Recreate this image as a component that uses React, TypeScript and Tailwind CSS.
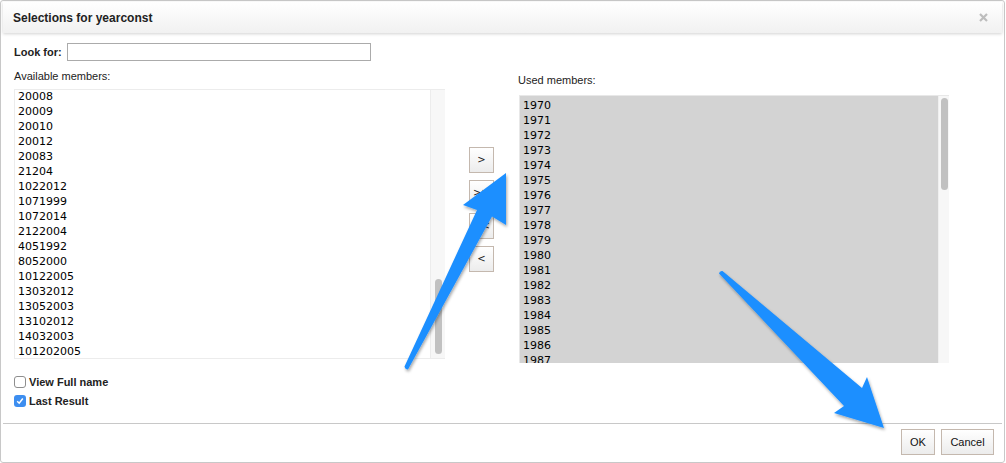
import React from "react";

const left = ["20008","20009","20010","20012","20083","21204","1022012","1071999","1072014","2122004","4051992","8052000","10122005","13032012","13052003","13102012","14032003","101202005"];
const right = Array.from({ length: 18 }, (_, i) => String(1970 + i));

function SmallBtn({ label }: { label: string }) {
  return (
    <button className="w-[25px] h-[26px] border border-[#c4b8ae] bg-gradient-to-b from-white to-[#ececec] text-[10px] leading-none text-[#222] flex items-center justify-center font-['DejaVu_Sans',sans-serif]">
      {label}
    </button>
  );
}

export default function App() {
  return (
    <div className="relative w-[1006px] h-[463px] bg-white font-['Liberation_Sans',Arial,sans-serif] text-[#222] overflow-hidden">
      <div className="w-[1005px] h-[463px] border border-[#c8c8c8] rounded-[3px] flex flex-col">
        {/* header */}
        <div className="mx-[2px] mt-[1px] h-[31px] bg-gradient-to-b from-white to-[#f1f1f1] shadow-[0_1px_3px_rgba(0,0,0,0.18)] flex items-center justify-between pl-[10px] pr-[14px]">
          <span className="text-[12px] font-bold text-[#222]">Selections for yearconst</span>
          <svg width="9" height="9" viewBox="0 0 9 9">
            <path d="M1 1L8 8M8 1L1 8" stroke="#bdbdbd" strokeWidth="2.2" />
          </svg>
        </div>
        {/* body */}
        <div className="flex-1 flex flex-col pl-[13px] pt-[10px]">
          <div className="flex items-start">
            <div className="flex flex-col w-[431px]">
              <div className="flex items-center h-[18px]">
                <span className="text-[11px] font-bold w-[53px]">Look for:</span>
                <input className="w-[304px] h-[18px] border border-[#ababab] bg-white outline-none" />
              </div>
              <div className="mt-[8px] text-[11px] leading-[14px]">Available members:</div>
              <div className="mt-[6px] h-[270px] flex border border-[#ececec] border-r-0">
                <div className="flex-1 overflow-hidden pl-[3px] font-['DejaVu_Sans',sans-serif] text-[11px] leading-[15px] text-black">
                  <div className="-mt-[1px]">
                    {left.map((v) => (
                      <div key={v}>{v}</div>
                    ))}
                  </div>
                </div>
                <div className="w-[15px] bg-[#f7f7f7] border-l border-[#ececec] flex flex-col justify-end items-center pb-[4px]">
                  <div className="w-[7px] h-[75px] rounded-full bg-[#c1c1c1]" />
                </div>
              </div>
            </div>
            <div className="ml-[24px] mt-[104px] flex flex-col gap-[7px]">
              <SmallBtn label=">" />
              <SmallBtn label=">>" />
              <SmallBtn label="<<" />
              <SmallBtn label="<" />
            </div>
            <div className="ml-[24px] flex flex-col w-[431px] pt-[30px]">
              <div className="text-[11px] leading-[14px]">Used members:</div>
              <div className="mt-[8px] ml-[1px] h-[268px] flex border-t border-l border-[#e8e8e8]">
                <div className="flex-1 bg-[#d3d3d3] overflow-hidden pl-[3px] pt-[2px] font-['DejaVu_Sans',sans-serif] text-[11px] leading-[15px] text-black">
                  {right.map((v) => (
                    <div key={v}>{v}</div>
                  ))}
                </div>
                <div className="w-[11px] bg-[#f7f7f7] border-l border-[#efefef] flex flex-col items-center pt-[2px]">
                  <div className="w-[7px] h-[92px] rounded-full bg-[#c1c1c1]" />
                </div>
              </div>
            </div>
          </div>
          <div className="mt-[13px] flex flex-col gap-[7px] text-[11px] font-bold">
            <label className="flex items-center gap-[3px] h-[12px]">
              <span className="w-[12px] h-[12px] border border-[#8e8e8e] rounded-[3px] bg-white" />
              View Full name
            </label>
            <label className="flex items-center gap-[3px] h-[12px]">
              <span className="w-[12px] h-[12px] rounded-[3px] bg-[#3d8ef0] flex items-center justify-center">
                <svg width="8" height="8" viewBox="0 0 8 8">
                  <path d="M1.2 4.2L3.2 6.2L6.8 1.5" stroke="white" strokeWidth="1.5" fill="none" />
                </svg>
              </span>
              Last Result
            </label>
          </div>
        </div>
        {/* footer */}
        <div className="mx-[2px] h-[39px] border-t border-[#c8c8c8] flex items-start justify-end gap-[6px] pt-[5px] pr-[8px]">
          <button className="h-[26px] w-[34px] border border-[#c4b8ae] bg-gradient-to-b from-white to-[#ececec] text-[11px] text-[#111]">OK</button>
          <button className="h-[26px] w-[53px] border border-[#c4b8ae] bg-gradient-to-b from-white to-[#ececec] text-[11px] text-[#111]">Cancel</button>
        </div>
      </div>
      {/* annotation arrows */}
      <svg className="absolute left-0 top-0 pointer-events-none" width="1006" height="463" viewBox="0 0 1006 463">
        <defs>
          <filter id="sh" x="-20%" y="-20%" width="140%" height="140%">
            <feDropShadow dx="1" dy="2" stdDeviation="1.5" floodColor="#000" floodOpacity="0.35" />
          </filter>
        </defs>
        <g filter="url(#sh)" fill="#1e8fff">
          <path d="M404.5 366.5 Q405 369.5 408 369.5 L492 216.5 L506 225 L506 173 L463 205 L477 210 Z" />
          <path d="M719 273.5 Q719.5 270.5 722.5 271 L862 388 L867 377 L884 428 L834 413 L844 406 Z" />
        </g>
      </svg>
    </div>
  );
}
